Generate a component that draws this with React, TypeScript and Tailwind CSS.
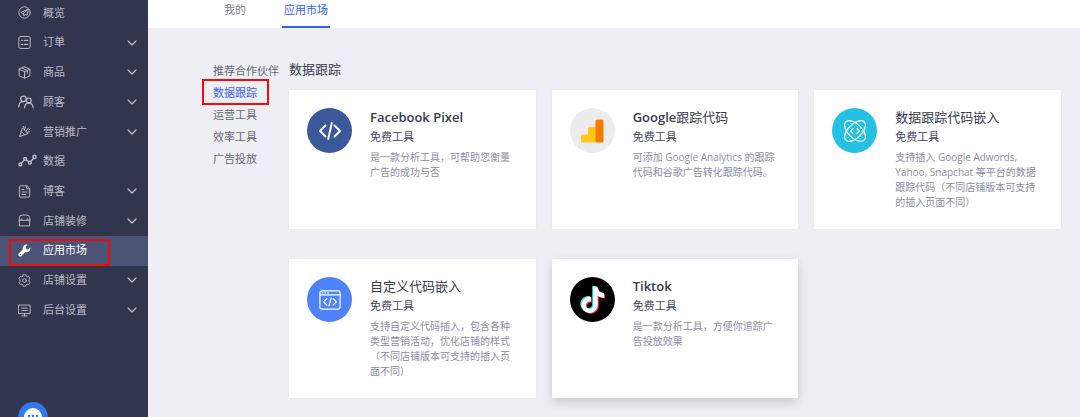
import type { ReactNode } from 'react';

const stroke = {
  viewBox: '0 0 24 24',
  fill: 'none',
  stroke: 'currentColor',
  strokeWidth: 1.8,
  strokeLinecap: 'round' as const,
  strokeLinejoin: 'round' as const,
  'aria-hidden': true,
};

const iconClass = 'h-[13px] w-[13px] shrink-0';

const navItems: { label: string; icon: ReactNode; expandable?: boolean; active?: boolean }[] = [
  {
    label: '概览',
    icon: (
      <svg {...stroke} className={iconClass}>
        <circle cx="12" cy="12" r="10.5" />
        <path d="M18 6 5.500 12l4 1.800 1.500 4.700 2-3 3 1zM9.500 13.800 18 6" />
      </svg>
    ),
  },
  {
    label: '订单',
    expandable: true,
    icon: (
      <svg {...stroke} className={iconClass}>
        <rect x="1.500" y="1" width="21" height="22" rx="3" />
        <path d="M6.500 8h2M12 8h6M6.500 15.500h2M12 15.500h6" strokeWidth={2.400} />
      </svg>
    ),
  },
  {
    label: '商品',
    expandable: true,
    icon: (
      <svg {...stroke} className={iconClass}>
        <path d="M12 1.500 22 6v12l-10 4.500L2 18V6zM2 6l10 4.500L22 6M12 10.500v12M7 3.800l10 4.500v5" />
      </svg>
    ),
  },
  {
    label: '顾客',
    expandable: true,
    icon: (
      <svg {...stroke} strokeWidth={2.200} viewBox="0 0 28 24" className="h-[14px] w-4 shrink-0">
        <circle cx="9.5" cy="6.500" r="4.800" />
        <path d="M1.500 20.500c0-5.500 3-9 7.500-9" />
        <circle cx="19" cy="9.500" r="4.200" />
        <path d="M11.500 22c.3-4.800 3.200-8 7.300-8s7.200 3.200 7.700 8" />
      </svg>
    ),
  },
  {
    label: '营销推广',
    expandable: true,
    icon: (
      <svg {...stroke} className={iconClass}>
        <path d="M8 6 2.500 21.500 18 16zM6 12l6.500 6.500M12 9l1.500-6M15 11l4-5M16.500 13.500l5-1M10.500 4.500l-.5-2M20 9l2-1" />
      </svg>
    ),
  },
  {
    label: '数据',
    icon: (
      <svg {...stroke} strokeWidth={2.400} viewBox="0 0 32 24" className="h-[14px] w-[19px] shrink-0">
        <circle cx="3.800" cy="18" r="2.500" />
        <circle cx="12" cy="8.500" r="2.500" />
        <circle cx="20" cy="15" r="2.500" />
        <circle cx="28" cy="5" r="2.800" />
        <path d="M5.500 16 10.300 10.500M14 10.200l4.200 3.200M21.600 13l4.600-5.800" />
      </svg>
    ),
  },
  {
    label: '博客',
    expandable: true,
    icon: (
      <svg {...stroke} className={iconClass}>
        <path d="M16 1.500H4.500a2 2 0 0 0-2 2v17a2 2 0 0 0 2 2h15a2 2 0 0 0 2-2V7zM16 1.500V7h5.500M7 8.500h4M7 13h10M7 17.500h7" />
      </svg>
    ),
  },
  {
    label: '店铺装修',
    expandable: true,
    icon: (
      <svg {...stroke} className={iconClass}>
        <path d="M2.500 11V7a5 5 0 0 1 5-5h9a5 5 0 0 1 5 5v4M1.500 11.500h21M2.500 11.500V22h19V11.500M7 8.500v3M17 8.500v3" />
      </svg>
    ),
  },
  {
    label: '应用市场',
    active: true,
    icon: (
      <svg viewBox="0 0 24 24" fill="currentColor" aria-hidden="true" className={iconClass}>
        <path d="M22.600 6.200 18.800 10l-4-.8-.8-4 3.800-3.800A7 7 0 0 0 9 10.300L1.800 17.300a3.200 3.200 0 0 0 4.700 4.700l7.100-7.100a7 7 0 0 0 9-8.700zM4.500 20.700a1.200 1.200 0 1 1 0-2.400 1.200 1.200 0 0 1 0 2.400z" />
      </svg>
    ),
  },
  {
    label: '店铺设置',
    expandable: true,
    icon: (
      <svg {...stroke} className={iconClass}>
        <path d="M9.500 1.500h5l.7 2.600 1.800 1 2.600-.7 2.500 4.300-1.900 1.900v2.800l1.900 1.900-2.500 4.300-2.600-.7-1.800 1-.7 2.600h-5l-.7-2.600-1.800-1-2.600.7-2.500-4.300 1.900-1.900v-2.800L1.900 8.700l2.500-4.300 2.600.7 1.800-1z" />
        <circle cx="12" cy="12" r="3.500" />
      </svg>
    ),
  },
  {
    label: '后台设置',
    expandable: true,
    icon: (
      <svg {...stroke} className={iconClass}>
        <path d="M1.500 2h21v15.500h-21zM7 7.500h10M7 12h10M12 17.500V22M7 22h10" />
      </svg>
    ),
  },
];

const categories = ['推荐合作伙伴', '数据跟踪', '运营工具', '效率工具', '广告投放'];

const CodeIcon = () => (
  <svg {...stroke} strokeWidth={1.900} className="h-6 w-6">
    <path d="M7.500 6.500 2 12l5.500 5.500M16.500 6.500 22 12l-5.500 5.500M13.800 4l-3.600 16" />
  </svg>
);

const AnalyticsIcon = () => (
  <svg viewBox="0 0 24 24" className="h-6 w-6" aria-hidden="true">
    <path
      d="M2.500 15.500H8V9.500A1.500 1.500 0 0 1 9.500 8H16v15.500H2.500A1.500 1.500 0 0 1 1 22v-5a1.500 1.500 0 0 1 1.500-1.500z"
      fill="#ffc517"
    />
    <rect x="15.500" y="0.500" width="8" height="23" rx="1.500" fill="#f57c00" />
  </svg>
);

const AtomIcon = () => (
  <svg {...stroke} strokeWidth={1.300} viewBox="-1 -1 26 26" className="h-6 w-6">
    <ellipse cx="12" cy="12" rx="14" ry="7.500" transform="rotate(45 12 12)" />
    <ellipse cx="12" cy="12" rx="14" ry="7.500" transform="rotate(-45 12 12)" />
    <path d="m9.800 9.500-2.500 2.500 2.500 2.500M14.200 9.500l2.500 2.500-2.500 2.500" />
  </svg>
);

const BrowserIcon = () => (
  <svg {...stroke} strokeWidth={1.300} className="h-[22px] w-[22px]">
    <rect x="1" y="2" width="22" height="20" rx="2" />
    <path d="M1 6.500h22M3.500 4.300h.5M6.500 4.300H7M9.500 4.300h.5M8.500 10.500 5 14l3.500 3.500M15.500 10.500 19 14l-3.500 3.500M13.300 10l-2.600 8.500" />
  </svg>
);

const notePath =
  'M12.500 0h4.100c.1 1.600.7 3.200 1.800 4.200 1.100 1.100 2.700 1.600 4.200 1.800v4.100c-1.500-.1-2.900-.4-4.200-1-.6-.3-1.100-.6-1.600-.9v8.900c-.1 1.400-.6 2.800-1.400 3.900-1.300 1.900-3.600 3.200-5.900 3.200-1.400.1-2.900-.3-4.100-1-2-1.200-3.400-3.400-3.700-5.700v-1.500c.2-1.900 1.100-3.700 2.600-5 1.700-1.400 3.900-2.100 6.100-1.700v4.500c-1-.3-2.200-.2-3 .4-.6.4-1.100 1-1.400 1.800-.2.500-.1 1.100-.1 1.600.2 1.700 1.800 3 3.500 2.900 1.100 0 2.200-.7 2.800-1.600.2-.3.400-.7.400-1.100.1-1.800.1-3.600.1-5.500V0z';

const TiktokIcon = () => (
  <svg viewBox="0 0 25 26" className="h-[28px] w-[28px]" aria-hidden="true">
    <path d={notePath} fill="#25f4ee" />
    <path d={notePath} fill="#fe2c55" transform="translate(2 1.600)" />
    <path d={notePath} fill="#fff" transform="translate(1 0.800)" />
  </svg>
);

const tools: { brand?: string; name?: string; text: string; icon: ReactNode; tone: string; raised?: boolean }[] = [
  { brand: 'Facebook Pixel', text: '是一款分析工具，可帮助您衡量广告的成功与否', icon: <CodeIcon />, tone: 'bg-[#3b5998]' },
  {
    brand: 'Google',
    name: '跟踪代码',
    text: '可添加 Google Analytics 的跟踪代码和谷歌广告转化跟踪代码。',
    icon: <AnalyticsIcon />,
    tone: 'bg-[#ececec]',
  },
  {
    name: '数据跟踪代码嵌入',
    text: '支持插入 Google Adwords, Yahoo, Snapchat 等平台的数据跟踪代码（不同店铺版本可支持的插入页面不同）',
    icon: <AtomIcon />,
    tone: 'bg-[#25c1e2]',
  },
  {
    name: '自定义代码嵌入',
    text: '支持自定义代码插入，包含各种类型营销活动，优化店铺的样式（不同店铺版本可支持的插入页面不同）',
    icon: <BrowserIcon />,
    tone: 'bg-[#4e83fd]',
  },
  {
    brand: 'Tiktok',
    text: '是一款分析工具，方便你追踪广告投放效果',
    icon: <TiktokIcon />,
    tone: 'bg-black',
    raised: true,
  },
];

function Sidebar() {
  return (
    <aside className="relative w-[148px] shrink-0 overflow-hidden bg-[#31354d]">
      <nav className="-mt-[2px] grid h-[327px] auto-rows-fr">
        {navItems.map((item) => (
          <a
            key={item.label}
            href="#"
            className={`relative flex items-center pr-[11px] pl-[18px] text-[11px] ${
              item.active ? 'bg-[#4c5476] text-white' : 'text-[#b9bbc7]'
            }`}
          >
            <span className="flex w-[25px] shrink-0">{item.icon}</span>
            <span className="flex-1">{item.label}</span>
            {item.expandable && (
              <svg {...stroke} viewBox="0 0 10 6" strokeWidth={1.300} className="h-[6px] w-[10px]">
                <path d="m1 1 4 4 4-4" />
              </svg>
            )}
            {item.active && (
              <span className="absolute top-[3px] bottom-0 left-[9px] w-[101px] border-2 border-[#f00b0f]" />
            )}
          </a>
        ))}
      </nav>
      <button
        type="button"
        aria-label="客服"
        className="fixed -bottom-[15px] left-[18px] flex h-[30px] w-[30px] items-center justify-center rounded-full bg-[#2f7be8]"
      >
        <svg viewBox="0 0 20 20" className="h-5 w-5" aria-hidden="true">
          <circle cx="10" cy="10" r="9" fill="#fff" />
          <circle cx="6" cy="9" r="1.200" fill="#2f7be8" />
          <circle cx="10" cy="9" r="1.200" fill="#2f7be8" />
          <circle cx="14" cy="9" r="1.200" fill="#2f7be8" />
        </svg>
      </button>
    </aside>
  );
}

export default function App() {
  return (
    <div className="flex min-h-screen bg-[#eeeff5] font-['Open_Sans','Noto_Sans_CJK_SC',sans-serif]">
      <Sidebar />
      <div className="min-w-0 flex-1">
        <header className="flex h-7 gap-[34px] bg-white pl-[74px] text-[11px] leading-5">
          <a href="#" className="px-[2px] text-[#7d8190]">
            我的
          </a>
          <a href="#" className="border-b-2 border-[#3460ee] px-[2px] text-[#3460ee]">
            应用市场
          </a>
        </header>

        <main className="flex pt-[31px] pr-[19px] pb-[18px] pl-[65px]">
          <nav className="w-[76px] shrink-0 pt-px text-[11px] leading-[22px] text-[#666970]">
            {categories.map((name, i) => (
              <a
                key={name}
                href="#"
                className={`relative block whitespace-nowrap ${i === 1 ? 'text-[#3d63ee]' : ''}`}
              >
                {name}
                {i === 1 && (
                  <span className="absolute -top-[3px] -bottom-px -left-[11px] w-[67px] border-2 border-[#f8090d]" />
                )}
              </a>
            ))}
          </nav>

          <section className="min-w-0 flex-1">
            <h2 className="text-[13px] leading-5 text-[#373b4d]">数据跟踪</h2>
            <div className="mt-[11px] grid grid-cols-3 gap-x-4 gap-y-[30px]">
              {tools.map((tool) => (
                <article
                  key={tool.text}
                  className={`flex min-h-[139px] gap-[18px] bg-white p-[18px] ${
                    tool.raised ? 'shadow-[0_4px_10px_rgba(0,0,0,0.16)]' : 'shadow-[0_0_2px_rgba(0,0,0,0.06)]'
                  }`}
                >
                  <div
                    className={`flex h-[45px] w-[45px] shrink-0 items-center justify-center rounded-full text-white ${tool.tone}`}
                  >
                    {tool.icon}
                  </div>
                  <div className="min-w-0 flex-1">
                    <h3 className="-mt-px text-[13px] leading-5 text-[#373b4d]">
                      {tool.brand && <span className="font-semibold">{tool.brand}</span>}
                      {tool.name}
                    </h3>
                    <p className="text-[11px] leading-5 text-[#42465a]">免费工具</p>
                    <p className="mt-[3px] text-[10px] leading-[15px] text-[#8a8da8]">{tool.text}</p>
                  </div>
                </article>
              ))}
            </div>
          </section>
        </main>
      </div>
    </div>
  );
}
